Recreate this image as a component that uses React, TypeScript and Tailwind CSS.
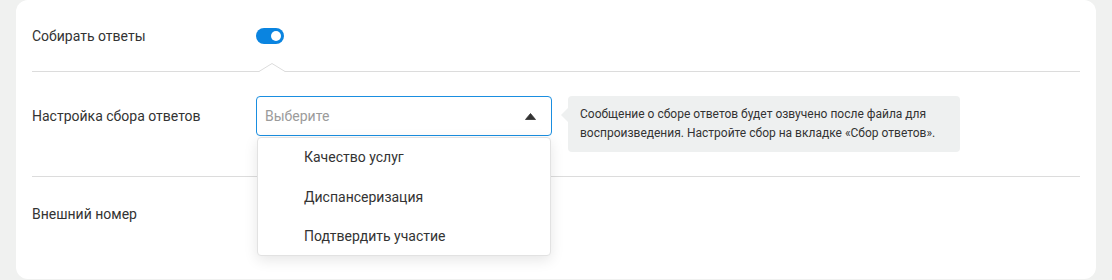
import React from "react";

export default function App() {
  const font = { fontFamily: "Roboto, 'Noto Sans', sans-serif" };
  return (
    <div className="w-[1112px] h-[280px] bg-[#f0f1f0] px-4 text-[#333333]" style={font}>
      <div className="bg-white rounded-xl h-[279px] px-4 flex flex-col">
        {/* row 1 */}
        <div className="h-[71px] flex items-center">
          <div className="w-[224px] text-[14px] pt-[2px]">Собирать ответы</div>
          <div className="w-[28px] h-[16px] rounded-full bg-[#0a84e0] flex items-center justify-end pr-[3px]">
            <div className="w-[10px] h-[10px] rounded-full bg-white" />
          </div>
        </div>
        {/* separator with notch */}
        <div className="relative h-px bg-[#dcdcdc]">
          <svg className="absolute left-[226px] top-[-8px]" width="28" height="9" viewBox="0 0 28 9">
            <path d="M0 8.5 L1 8.5 L14 0.5 L27 8.5 L28 8.5 L28 9 L0 9 Z" fill="white" />
            <path d="M0 8.5 L1 8.5 L14 0.5 L27 8.5 L28 8.5" fill="none" stroke="#dcdcdc" strokeWidth="1" />
          </svg>
        </div>
        {/* row 2 */}
        <div className="flex items-start pt-6 pb-6 relative z-10">
          <div className="w-[224px] h-[40px] flex items-center text-[14px]">Настройка сбора ответов</div>
          <div className="relative w-[296px]">
            <div className="h-[40px] border border-[#1a8ee0] rounded flex items-center justify-between pl-2 pr-[15px]">
              <span className="text-[14px] text-[#9b9b9b]">Выберите</span>
              <svg width="11" height="7" viewBox="0 0 11 7">
                <path d="M5.5 0.5 L10.5 6.5 L0.5 6.5 Z" fill="#333" stroke="#333" strokeWidth="0.8" strokeLinejoin="round" />
              </svg>
            </div>
            <div className="absolute left-px right-px top-[41px] bg-white border border-[#e2e2e2] rounded shadow-[0_4px_14px_rgba(0,0,0,0.10)] flex flex-col">
              <div className="h-10 flex items-center pl-[46px] pb-[1px] text-[14px]">Качество услуг</div>
              <div className="h-10 flex items-center pl-[46px] pb-[1px] text-[14px]">Диспансеризация</div>
              <div className="h-[37px] flex items-center pl-[46px] pb-[1px] text-[14px]">Подтвердить участие</div>
            </div>
          </div>
          <div className="relative ml-4 w-[392px] h-[56px] bg-[#eef0f0] rounded px-3 py-[9px] text-[12px] leading-[19px]">
            <div className="absolute left-[-7px] top-[12px] w-0 h-0 border-y-[7px] border-y-transparent border-r-[7px] border-r-[#eef0f0]" />
            Сообщение о сборе ответов будет озвучено после файла для воспроизведения. Настройте сбор на вкладке «Сбор ответов».
          </div>
        </div>
        <div className="h-px bg-[#dcdcdc]" />
        {/* row 3 */}
        <div className="flex items-start pt-[19px]">
          <div className="w-[224px] h-[36px] flex items-center text-[14px]">Внешний номер</div>
          <div className="w-[296px] h-[36px] rounded" />
        </div>
      </div>
    </div>
  );
}
